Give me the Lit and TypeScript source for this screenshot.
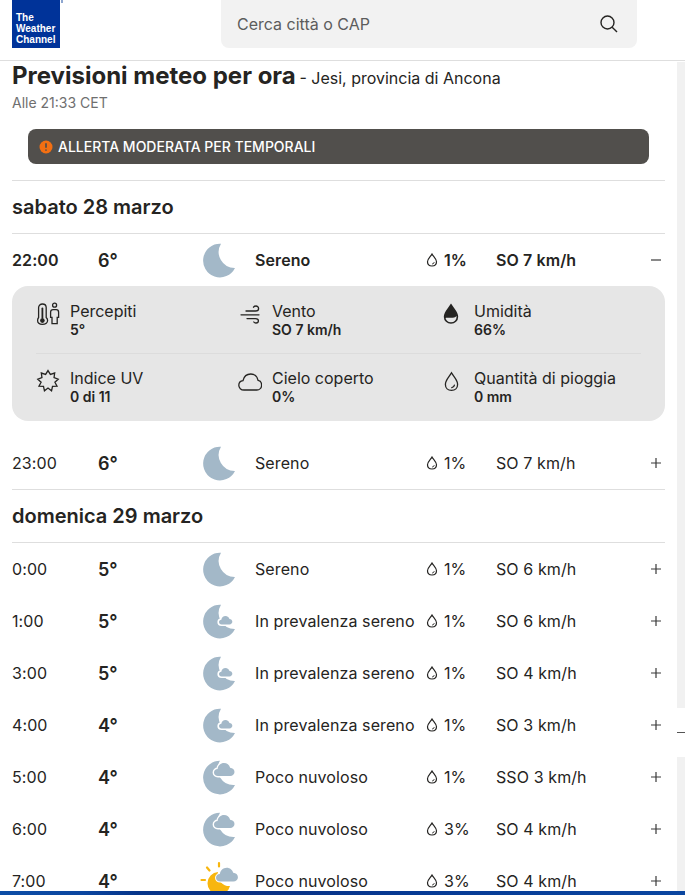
import { LitElement, html, css, svg } from "lit";
import { customElement } from "lit/decorators.js";

const MOON = svg`<path fill="#a3b8c8" d="M19 0.8A16.8 16.8 0 1 0 33 25A16 16 0 0 1 19 0.8Z"/>`;
const cloud = (x: number, y: number, s: number, fill = "#a3b8c8", stroke = "#fff", sw = 2.5) => svg`
  <g transform="translate(${x} ${y}) scale(${s})">
    <path fill="${fill}" stroke="${stroke}" stroke-width="${sw}" paint-order="stroke" stroke-linejoin="round"
      d="M4 16C1.5 16 0 14.4 0 12.4C0 10.4 1.6 8.9 3.6 8.9C4 5.6 6.6 3 10 3C13 3 15.4 5 16.1 7.8C18.6 7.9 20.5 9.7 20.5 12C20.5 14.3 18.6 16 16.2 16Z"/>
  </g>`;

const ICONS: Record<string, unknown> = {
  moon: MOON,
  mostly: svg`${MOON}${cloud(17, 10, 0.65, "#a3b8c8", "#fff", 5)}`,
  partly: svg`<path fill="#a3b8c8" d="M18 0.8A16.8 16.8 0 1 0 33 25A16 16 0 0 1 18 0.8Z"/>${cloud(12, 0, 1, "#a3b8c8", "#fff", 2.8)}`,
  sun: svg`
    <path fill="#f8b60e" d="M16 8A11.4 11.4 0 1 0 28 22A11.5 11.5 0 0 1 16 8Z"/>
    <g stroke="#f8b60e" stroke-width="2.2" stroke-linecap="round">
      <path d="M17 -1V2.5M5 3.5L7.5 6.5M-0.5 16H3"/>
    </g>
    ${cloud(14, 0.5, 1.07, "#a3b8c8", "#fff", 1.8)}`,
};

interface Row { t: string; d: string; icon: string; c: string; p: string; w: string; }
const day1b: Row = { t: "23:00", d: "6°", icon: "moon", c: "Sereno", p: "1%", w: "SO 7 km/h" };
const day2: Row[] = [
  { t: "0:00", d: "5°", icon: "moon", c: "Sereno", p: "1%", w: "SO 6 km/h" },
  { t: "1:00", d: "5°", icon: "mostly", c: "In prevalenza sereno", p: "1%", w: "SO 6 km/h" },
  { t: "3:00", d: "5°", icon: "mostly", c: "In prevalenza sereno", p: "1%", w: "SO 4 km/h" },
  { t: "4:00", d: "4°", icon: "mostly", c: "In prevalenza sereno", p: "1%", w: "SO 3 km/h" },
  { t: "5:00", d: "4°", icon: "partly", c: "Poco nuvoloso", p: "1%", w: "SSO 3 km/h" },
  { t: "6:00", d: "4°", icon: "partly", c: "Poco nuvoloso", p: "3%", w: "SO 4 km/h" },
  { t: "7:00", d: "4°", icon: "sun", c: "Poco nuvoloso", p: "3%", w: "SO 4 km/h" },
];

const star = Array.from({ length: 18 }, (_, i) => {
  const a = (i * Math.PI) / 9 - Math.PI / 2;
  const r = i % 2 ? 7 : 10.4;
  return `${(12 + r * Math.cos(a)).toFixed(2)},${(12 + r * Math.sin(a)).toFixed(2)}`;
}).join(" ");

const DETAIL_ICONS: Record<string, unknown> = {
  feels: svg`
    <path d="M2.6 15.5V5.6C2.6 3.4 4.4 2 6.4 2C8.4 2 10.2 3.4 10.2 5.6V15.5C11.2 16.4 11.6 17.4 11.6 18.6C11.6 20.9 9.2 22.4 6.4 22.4C3.6 22.4 1.6 20.9 1.6 18.6C1.6 17.4 1.8 16.4 2.6 15.5Z"/>
    <path d="M6.4 6.5V16" stroke-width="1.8"/><circle cx="6.4" cy="18.6" r="2.3" fill="#252422" stroke="none"/>
    <circle cx="18.6" cy="3.2" r="2"/>
    <path d="M16 21.6V15.4H14.6V10.2C14.6 8.6 15.6 7.6 17 7.6H20.2C21.6 7.6 22.6 8.6 22.6 10.2V15.4H21.2V21.6Z"/>`,
  wind: svg`
    <path d="M8 9H17.5C19.5 9 20.6 7.8 20.6 6.4C20.6 5 19.4 4 18 4C16.8 4 16 4.5 15.5 5.2"/>
    <path d="M3 12.8H21"/>
    <path d="M9 16.6H17.5C19.3 16.6 20.4 17.6 20.4 18.8C20.4 20 19.4 21 18 21C16.9 21 16.2 20.6 15.8 20"/>`,
  hum: svg`
    <path stroke-width="1.6" d="M11 3C8.6 7.2 4.6 10.4 4.6 14.8C4.6 18.4 7.4 21 11 21C14.6 21 17.4 18.4 17.4 14.8C17.4 10.4 13.4 7.2 11 3Z"/>
    <path fill="#252422" stroke="none" d="M11 3C8.6 7.2 4.6 10.4 4.6 14.8C4.6 15.4 4.7 15.8 4.8 16.2C8 14.6 13.4 17.6 17.2 13.4C16.2 9.8 13 6.6 11 3Z"/>`,
  uv: svg`<polygon stroke-linejoin="miter" points="${star}"/>`,
  cloud: svg`
    <path d="M6 21C3 21 .8 19 .8 16.3C.8 13.8 2.7 12 5 11.7C5.9 7.6 9 5 12.8 5C16.6 5 19.5 7.8 20.1 11.4C22.3 11.8 23.6 13.8 23.6 16.2C23.6 19 21.5 21 18.8 21Z"/>`,
  rain: svg`
    <path d="M11.5 3.8C9.2 8 5.4 11 5.4 15.4C5.4 19 8 21.4 11.5 21.4C15 21.4 17.6 19 17.6 15.4C17.6 11 13.8 8 11.5 3.8Z"/>
    <path d="M11.8 18.6C13.2 18.4 14.2 17.4 14.4 16.2"/>`,
};

const details = [
  { i: "feels", l: "Percepiti", v: "5°" },
  { i: "wind", l: "Vento", v: "SO 7 km/h" },
  { i: "hum", l: "Umidità", v: "66%" },
  { i: "uv", l: "Indice UV", v: "0 di 11" },
  { i: "cloud", l: "Cielo coperto", v: "0%" },
  { i: "rain", l: "Quantità di pioggia", v: "0 mm" },
];

@customElement("app-root")
export class AppRoot extends LitElement {
  static styles = css`
    :host { display: block; position: relative; width: 685px; height: 895px; overflow: hidden; background: #fff;
      font-family: Inter, "Liberation Sans", sans-serif; color: #252422; }
    header { height: 60px; border-bottom: 1px solid #dedede; display: flex; box-sizing: content-box; }
    .logo { position: relative; margin-left: 12px; width: 48px; height: 48px; background: #003399; color: #fff; box-sizing: border-box;
      padding: 12px 0 0 4px; font: 700 10px/11px "Liberation Sans", sans-serif; flex: none; white-space: nowrap; }
    .logo::after { content: ""; position: absolute; left: 49px; top: 0; width: 2px; height: 3px; background: #8ea6d0; }
    .search { margin-left: 161px; width: 416px; height: 48px; background: #f2f2f2; border-radius: 0 0 8px 8px;
      display: flex; align-items: center; justify-content: space-between; padding: 0 18px 0 16px; box-sizing: border-box;
      font-size: 16px; color: #5c5c5c; }
    main { padding: 0 20px 0 12px; }
    h1 { margin: 0; height: 30px; line-height: 30px; font-size: 24px; font-weight: 700; white-space: nowrap; }
    h1 span { font-size: 16px; font-weight: 400; margin-left: -2px; }
    .asof { font-size: 14px; line-height: 20px; color: #6f6f6f; margin-top: 2px; }
    .alert { margin: 16px; height: 35px; background: #514f4c; border-radius: 8px; display: flex; align-items: center;
      gap: 5px; padding-left: 11px; color: #fff; font-size: 14px; font-weight: 500; }
    hr { margin: 0; border: 0; border-top: 1px solid #dedede; }
    h2 { margin: 0; height: 52px; display: flex; align-items: center; font-size: 20px; font-weight: 600; }
    .row { height: 52px; display: grid; grid-template-columns: 86px 105px 52px 170px 71px 1fr 16px; align-items: center;
      font-size: 16px; }
    .row.sel { font-weight: 600; }
    .ls { letter-spacing: 0.1px; white-space: nowrap; }
    .temp { font-size: 18px; font-weight: 600; }
    .wx { width: 34px; height: 34px; display: block; overflow: visible; margin-left: -1px; }
    .prec { display: flex; align-items: center; gap: 6px; margin-left: 1px; }
    .prec svg { width: 12px; height: 14px; fill: none; stroke: #252422; stroke-width: 1.2; flex: none; }
    .tog { width: 12px; height: 12px; display: block; stroke: #3a3a3a; stroke-width: 1.2; margin: -1px 0 0 1px; }
    .panel { background: #e6e6e6; border-radius: 16px; height: 135px; padding: 0 24px; box-sizing: border-box;
      display: grid; grid-template-columns: 202px 202px 1fr; grid-template-rows: 67px 68px; margin-bottom: 16px; }
    .cell { display: flex; padding-top: 15px; box-sizing: border-box; border-bottom: 1px solid #dcdcdc; height: 68px; }
    .cell.b { border-bottom: 0; padding-top: 15px; height: 68px; }
    .cell svg { width: 24px; height: 24px; margin: 1px 10px 0 0; flex: none; fill: none; stroke: #252422; stroke-width: 1.3; stroke-linecap: round; }
    .lbl { font-size: 16px; line-height: 20px; }
    .val { font-size: 14px; line-height: 14px; font-weight: 600; margin-top: 2px; }
    .scroll { position: absolute; right: 0; width: 8px; background: #f1f1f1; }
    .s1 { top: 62px; height: 646px; }
    .s2 { top: 757px; height: 134px; }
    .dash { position: absolute; left: 677px; top: 732px; width: 8px; height: 1px; background: #555; }
    .task { position: absolute; left: 0; right: 0; bottom: 0; height: 4px;
      background: linear-gradient(90deg, #0d4ea6 0, #0b46a0 12%, #06358a 20%, #0a2f80 35%, #063a94 60%, #0b46a0 100%); }
  `;

  private row(r: Row, sel = false, open = false) {
    return html`<div class="row ${sel ? "sel" : ""}">
      <div class="ls">${r.t}</div>
      <div class="temp">${r.d}</div>
      <svg class="wx" viewBox="0 0 34 34">${ICONS[r.icon]}</svg>
      <div class="ls">${r.c}</div>
      <div class="prec"><svg viewBox="0 0 12 14">
        <path d="M6 1C4.6 3.6 1.5 5.6 1.5 8.8C1.5 11.4 3.5 13 6 13C8.5 13 10.5 11.4 10.5 8.8C10.5 5.6 7.4 3.6 6 1Z"/>
        <path d="M6.2 11C7.2 10.9 8 10.2 8.2 9.2" stroke-width="1"/>
      </svg>${r.p}</div>
      <div class="ls">${r.w}</div>
      <svg class="tog" viewBox="0 0 12 12">${open ? svg`<path d="M1 6H11"/>` : svg`<path d="M1 6H11M6 1V11"/>`}</svg>
    </div>`;
  }

  render() {
    return html`
      <header>
        <div class="logo">The<br />Weather<br />Channel</div>
        <div class="search">
          <span>Cerca città o CAP</span>
          <svg width="20" height="20" viewBox="0 0 20 20" fill="none" stroke="#252422" stroke-width="1.4">
            <circle cx="8.5" cy="8.5" r="6.5"/><path d="M13.2 13.2L18 18"/>
          </svg>
        </div>
      </header>
      <main>
        <h1>Previsioni meteo per ora <span>- Jesi, provincia di Ancona</span></h1>
        <div class="asof">Alle 21:33 CET</div>
        <div class="alert">
          <svg width="14" height="14" viewBox="0 0 14 14">
            <circle cx="7" cy="7" r="6.5" fill="#f36f12"/><path d="M7 3.2V7.8M7 9.6V10.8" stroke="#514f4c" stroke-width="1.7"/>
          </svg>
          ALLERTA MODERATA PER TEMPORALI
        </div>
        <hr />
        <h2>sabato 28 marzo</h2>
        <hr />
        ${this.row({ t: "22:00", d: "6°", icon: "moon", c: "Sereno", p: "1%", w: "SO 7 km/h" }, true, true)}
        <div class="panel">
          ${details.map((d, i) => html`<div class="cell ${i > 2 ? "b" : ""}">
            <svg viewBox="0 0 24 24">${DETAIL_ICONS[d.i]}</svg>
            <div><div class="lbl">${d.l}</div><div class="val">${d.v}</div></div>
          </div>`)}
        </div>
        ${this.row(day1b)}
        <hr />
        <h2>domenica 29 marzo</h2>
        <hr />
        ${day2.map((r) => this.row(r))}
      </main>
      <div class="scroll s1"></div>
      <div class="scroll s2"></div>
      <div class="dash"></div>
      <div class="task"></div>
    `;
  }
}
